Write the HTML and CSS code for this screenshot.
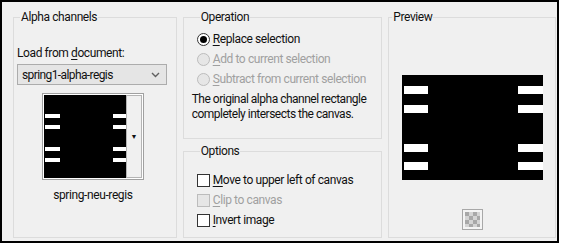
FILE: index.html
```html
<!DOCTYPE html>
<html lang="en">
<head>
    <meta charset="UTF-8">
    <title>Load Selection From Alpha Channel</title>
    <link rel="stylesheet" href="styles.css">
</head>
<body>

    <div class="dialog">

        <!-- Left column: channel source -->
        <fieldset class="group group-alpha">
            <legend>Alpha channels</legend>
            <div class="field-label">Load from <u>d</u>ocument:</div>
            <div class="combo">
                <span>spring1-alpha-regis</span>
                <svg class="chevron" width="9" height="6" viewBox="0 0 9 6">
                    <polyline points="1,1 4.5,4.5 8,1" fill="none" stroke="#606060" stroke-width="1.4"/>
                </svg>
            </div>
            <div class="thumb">
                <svg class="thumb-img" width="82" height="83" viewBox="0 0 82 83">
                    <rect width="82" height="83" fill="#000"/>
                    <g fill="#fff">
                        <rect x="1" y="19" width="15" height="4"/>
                        <rect x="1" y="30" width="15" height="4"/>
                        <rect x="1" y="52" width="15" height="4"/>
                        <rect x="1" y="63" width="15" height="4"/>
                        <rect x="69" y="19" width="13" height="4"/>
                        <rect x="69" y="30" width="13" height="4"/>
                        <rect x="69" y="52" width="13" height="4"/>
                        <rect x="69" y="63" width="13" height="4"/>
                    </g>
                </svg>
                <div class="thumb-button">&#9660;</div>
            </div>
            <div class="thumb-caption">spring-neu-regis</div>
        </fieldset>

        <!-- Middle column: operation and options -->
        <div class="middle">
            <fieldset class="group group-operation">
                <legend>Operation</legend>
                <div class="choice">
                    <span class="radio checked"></span>
                    <span><u>R</u>eplace selection</span>
                </div>
                <div class="choice disabled">
                    <span class="radio"></span>
                    <span><u>A</u>dd to current selection</span>
                </div>
                <div class="choice disabled">
                    <span class="radio"></span>
                    <span><u>S</u>ubtract from current selection</span>
                </div>
                <p class="note">The original alpha channel rectangle completely intersects the canvas.</p>
            </fieldset>

            <fieldset class="group group-options">
                <legend>Options</legend>
                <div class="choice">
                    <span class="check"></span>
                    <span><u>M</u>ove to upper left of canvas</span>
                </div>
                <div class="choice disabled">
                    <span class="check"></span>
                    <span><u>C</u>lip to canvas</span>
                </div>
                <div class="choice">
                    <span class="check"></span>
                    <span><u>I</u>nvert image</span>
                </div>
            </fieldset>
        </div>

        <!-- Right column: preview -->
        <fieldset class="group group-preview">
            <legend>Preview</legend>
            <svg class="preview-img" width="141" height="105" viewBox="0 0 141 105">
                <rect width="141" height="105" fill="#000"/>
                <g fill="#fff">
                    <rect x="2" y="11" width="24" height="8"/>
                    <rect x="2" y="30" width="24" height="8"/>
                    <rect x="2" y="69" width="24" height="8"/>
                    <rect x="2" y="87" width="24" height="8"/>
                    <rect x="116" y="11" width="25" height="8"/>
                    <rect x="116" y="30" width="25" height="8"/>
                    <rect x="116" y="69" width="25" height="8"/>
                    <rect x="116" y="87" width="25" height="8"/>
                </g>
            </svg>
            <svg class="transparency-icon" width="21" height="21" viewBox="0 0 21 21">
                <rect x="0.5" y="0.5" width="20" height="20" fill="#f4f4f4" stroke="#a8a8a8"/>
                <g fill="#a8a8a8">
                    <rect x="3" y="3" width="4" height="4"/>
                    <rect x="11" y="3" width="4" height="4"/>
                    <rect x="7" y="7" width="4" height="4"/>
                    <rect x="15" y="7" width="3" height="4"/>
                    <rect x="3" y="11" width="4" height="4"/>
                    <rect x="11" y="11" width="4" height="4"/>
                    <rect x="7" y="15" width="4" height="3"/>
                    <rect x="15" y="15" width="3" height="3"/>
                </g>
                <g fill="#d4d4d4">
                    <rect x="7" y="3" width="4" height="4"/>
                    <rect x="15" y="3" width="3" height="4"/>
                    <rect x="3" y="7" width="4" height="4"/>
                    <rect x="11" y="7" width="4" height="4"/>
                    <rect x="7" y="11" width="4" height="4"/>
                    <rect x="15" y="11" width="3" height="4"/>
                    <rect x="3" y="15" width="4" height="3"/>
                    <rect x="11" y="15" width="4" height="3"/>
                </g>
            </svg>
        </fieldset>

    </div>

</body>
</html>
```

FILE: styles.css
```css
/* Page */
body {
    margin: 0;
    background-color: #fff;
    font-family: Roboto, 'Liberation Sans', sans-serif;
    font-size: 12px;
    color: #111;
}

u {
    text-decoration-thickness: 1px;
    text-underline-offset: 2px;
}

/* Dialog frame */
.dialog {
    width: 559px;
    height: 243px;
    box-sizing: border-box;
    border: 2px solid #000;
    background-color: #f0f0f0;
    display: flex;
    gap: 6px;
    padding: 7px 1px 3px 11px;
}

/* Group boxes */
.group {
    margin: 0;
    padding: 0;
    border: 1px solid #dcdcdc;
    min-width: 0;
    box-sizing: border-box;
}

.group legend {
    margin-left: 3px;
    padding: 0 1px;
    line-height: 16px;
    letter-spacing: -0.4px;
}

.group-alpha {
    width: 164px;
    padding: 0 7px 0 3px;
}

.middle {
    width: 200px;
    display: flex;
    flex-direction: column;
    gap: 4px;
}

.group-operation {
    height: 130px;
    padding: 4px 0 0 13px;
}

.group-options {
    flex: 1;
    padding: 11px 0 0 13px;
}

.group-preview {
    width: 168px;
    display: flex;
    flex-direction: column;
    align-items: center;
}

/* Alpha channels column */
.field-label {
    margin-top: 20px;
    line-height: 16px;
    letter-spacing: -0.4px;
}

.combo {
    margin-top: 3px;
    width: 150px;
    height: 21px;
    box-sizing: border-box;
    border: 1px solid #acacac;
    background-color: #e5e5e5;
    display: flex;
    align-items: center;
    justify-content: space-between;
    padding: 0 6px 0 4px;
    letter-spacing: -0.6px;
}

.thumb {
    margin: 8px auto 0;
    width: 102px;
    display: flex;
    border: 1px solid #a0a0a0;
    background-color: #fff;
    padding: 1px;
    box-sizing: border-box;
}

.thumb-img {
    display: block;
}

.thumb-button {
    flex: 1;
    border: 1px solid #b4b4b4;
    background-color: #f0f0f0;
    font-size: 7px;
    display: flex;
    align-items: center;
    justify-content: center;
}

.thumb-caption {
    margin-top: 8px;
    text-align: center;
    letter-spacing: -0.4px;
}

/* Radios and checkboxes */
.choice {
    height: 20px;
    display: flex;
    align-items: center;
    gap: 3px;
    letter-spacing: -0.4px;
}

.choice.disabled {
    color: #a0a0a0;
}

.radio,
.check {
    width: 13px;
    height: 13px;
    box-sizing: border-box;
    border: 1px solid #333;
    background-color: #fff;
    flex-shrink: 0;
}

.radio {
    border-radius: 50%;
    display: flex;
    align-items: center;
    justify-content: center;
}

.radio.checked::after {
    content: "";
    width: 7px;
    height: 7px;
    border-radius: 50%;
    background-color: #000;
}

.disabled .radio,
.disabled .check {
    border-color: #bcbcbc;
    background-color: #e6e6e6;
}

.note {
    margin: 3px 0 0 -5px;
    line-height: 15px;
    width: 180px;
    letter-spacing: -0.5px;
}

/* Preview column */
.preview-img {
    display: block;
    margin-top: 50px;
}

.transparency-icon {
    display: block;
    margin-top: 29px;
}
```
